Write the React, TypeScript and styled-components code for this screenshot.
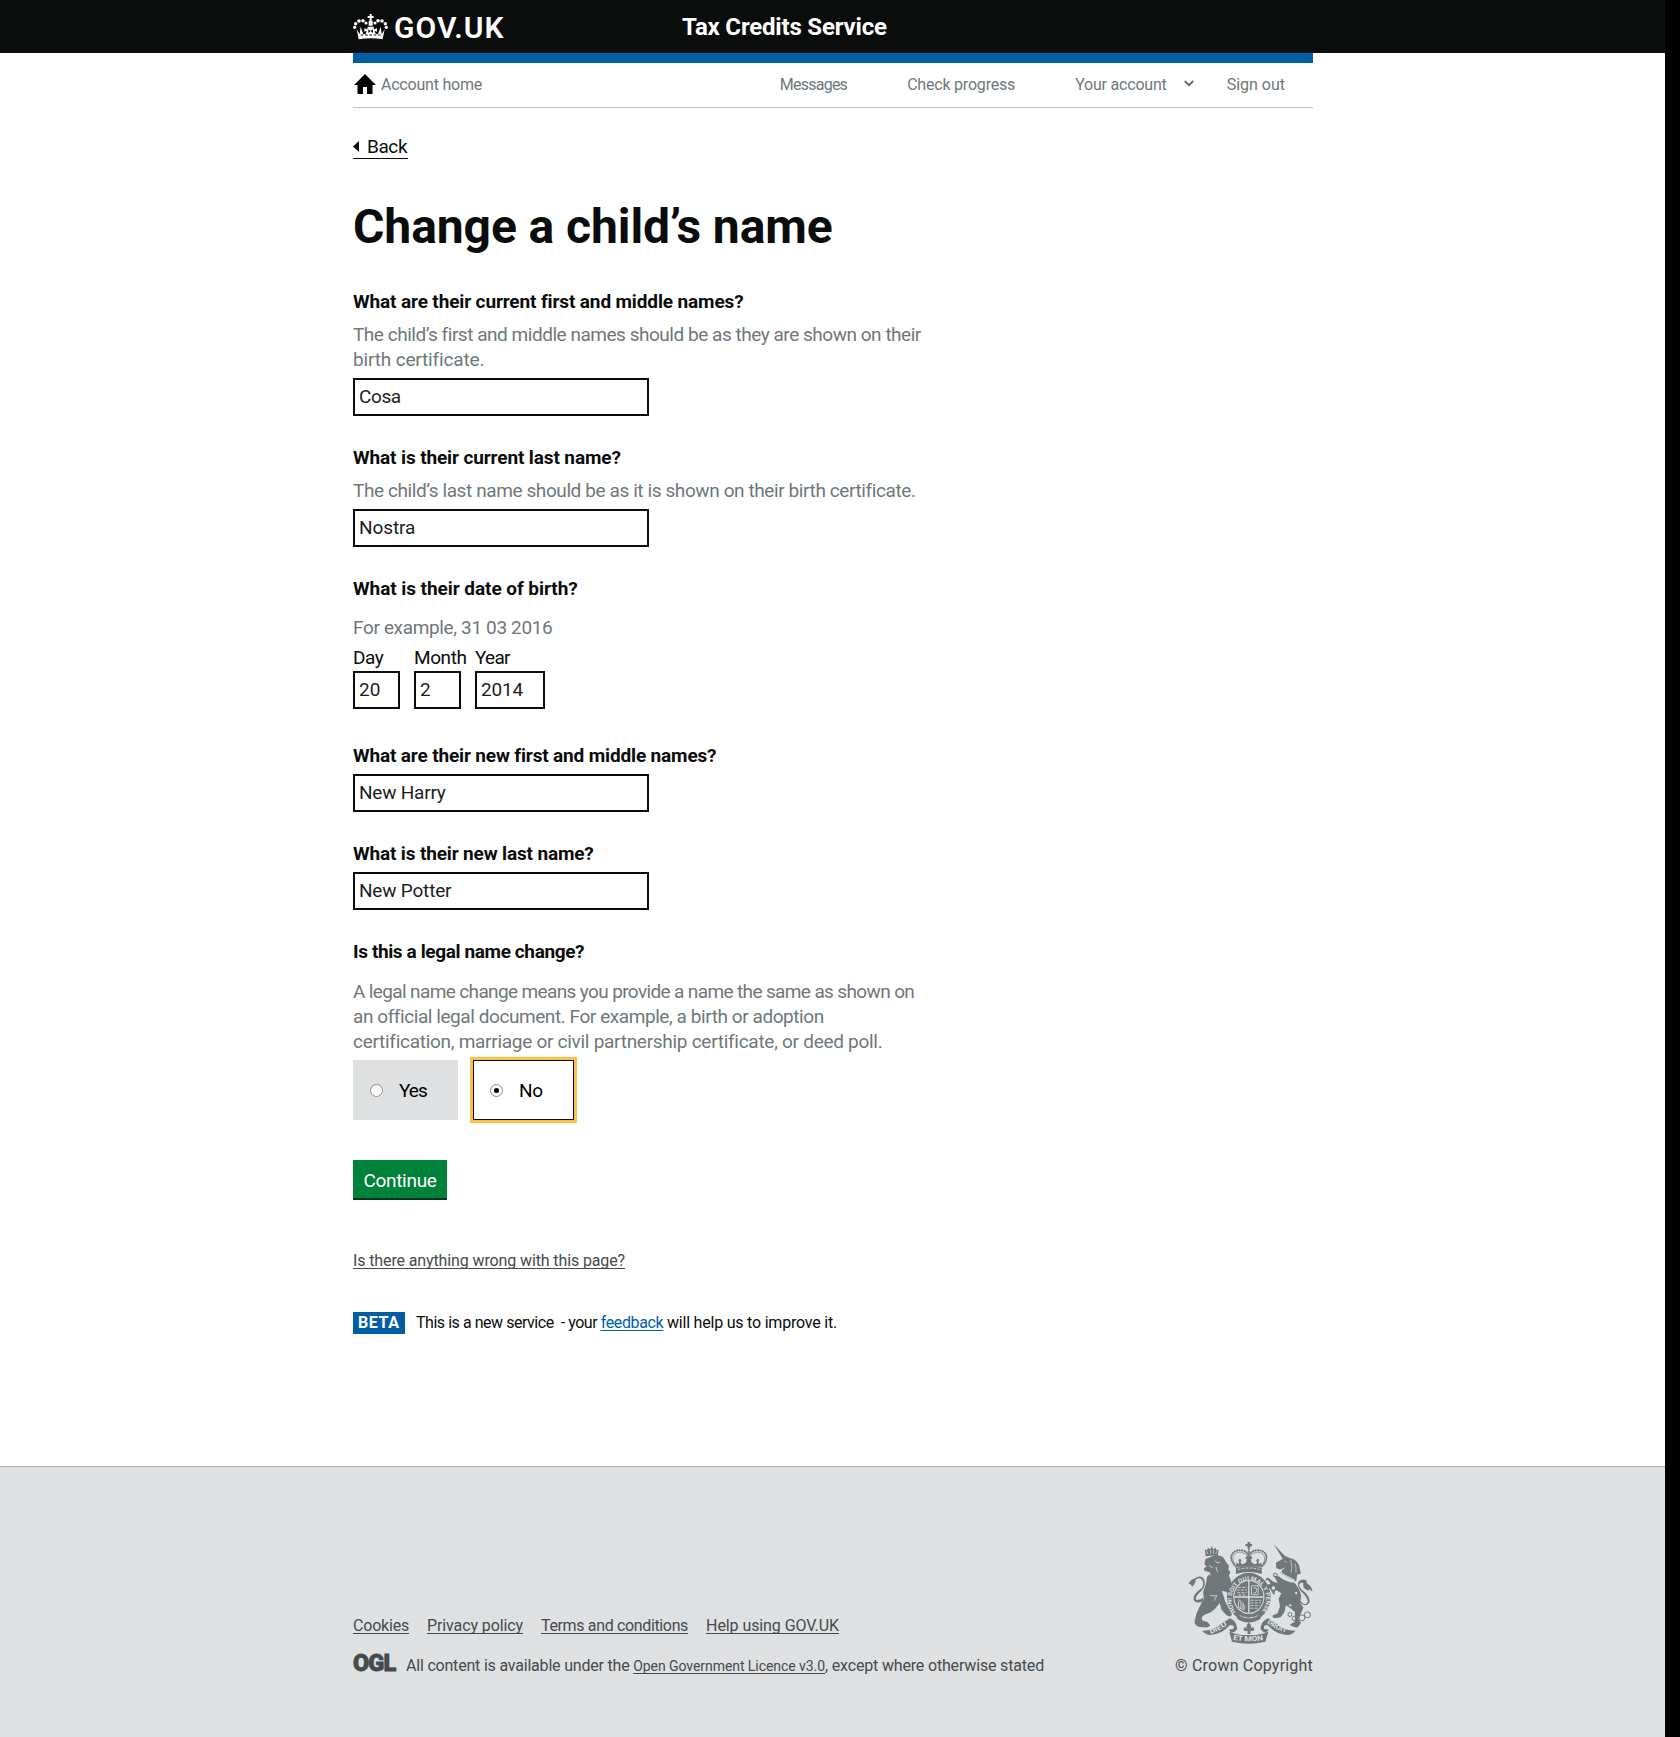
import React from "react";
import styled, { createGlobalStyle, css } from "styled-components";

const INK = "#0b0c0c";
const GREY = "#6f777b";
const FOOT = "#454a4d";
const BLUE = "#005ea5";

const GlobalStyle = createGlobalStyle`
  html { background: #000; }
  body { margin: 0; font-family: Roboto, "Liberation Sans", sans-serif; color: ${INK}; }
  *, *::before, *::after { box-sizing: border-box; }
`;

const tracking = css<{ $ls?: number }>`
  letter-spacing: ${(p) => p.$ls ?? 0}px;
`;

const Page = styled.div`
  width: 1665px;
  min-height: 1737px;
  background: #fff;
  display: flex;
  flex-direction: column;
`;
const Container = styled.div`
  width: 960px;
  margin-left: 353px;
`;
const Header = styled.header`
  height: 53px;
  background: ${INK};
  color: #fff;
`;
const HeaderRow = styled(Container)`
  display: grid;
  grid-template-columns: 329px 1fr;
  align-items: center;
  height: 53px;
`;
const Brand = styled.a`
  display: flex;
  align-items: center;
  gap: 6px;
  font-size: 30px;
  font-weight: 600;
  line-height: 53px;
  ${tracking}
`;
const BrandText = styled.span`
  padding-top: 1px;
`;
const ServiceName = styled.span`
  padding-top: 1px;
  font-size: 24px;
  font-weight: 700;
  line-height: 53px;
  ${tracking}
`;
const NavBar = styled(Container)`
  display: flex;
  justify-content: space-between;
  align-items: flex-start;
  height: 55px;
  padding: 11px 28px 0 1px;
  border-top: 10px solid ${BLUE};
  border-bottom: 1px solid #bfc1c3;
  color: ${GREY};
  font-size: 16px;
  line-height: 22px;
`;
const NavHome = styled.a`
  display: flex;
  gap: 5px;
  ${tracking}
`;
const NavLinks = styled.nav`
  display: flex;
  gap: 60px;
`;
const NavLink = styled.a`
  display: flex;
  white-space: nowrap;
  ${tracking}
`;
const NavGroup = styled.div`
  display: flex;
  gap: 17px;
`;
const Account = styled.div`
  display: flex;
  gap: 33px;
`;
const Main = styled.main`
  width: 960px;
  margin-left: 353px;
  display: flex;
  flex-direction: column;
  align-items: flex-start;
  height: 1358px;
`;
const BackLink = styled.a`
  display: flex;
  align-items: center;
  gap: 8px;
  width: 55px;
  height: 25px;
  margin-top: 26px;
  border-bottom: 1px solid ${INK};
  font-size: 19px;
  line-height: 24px;
  ${tracking}
`;
const BackText = styled.span`
  padding-top: 2px;
`;
const Title = styled.h1`
  margin: 43px 0 8px;
  font-size: 48px;
  line-height: 50px;
  font-weight: 700;
  ${tracking}
`;
const Field = styled.div<{ $gap?: number }>`
  display: flex;
  flex-direction: column;
  align-items: flex-start;
  margin-top: ${(p) => p.$gap ?? 29}px;
`;
const Label = styled.label`
  font-size: 19px;
  line-height: 25px;
  font-weight: 700;
  ${tracking}
`;
const Hint = styled.span<{ $gap?: number }>`
  display: flex;
  flex-direction: column;
  margin-top: ${(p) => p.$gap ?? 8}px;
  color: ${GREY};
  font-size: 19px;
  line-height: 25px;
`;
const Line = styled.span`
  white-space: pre;
  ${tracking}
`;
const Input = styled.input<{ $w?: number; $gap?: number; $ls?: number }>`
  width: ${(p) => p.$w ?? 296}px;
  height: 38px;
  margin: ${(p) => p.$gap ?? 6}px 0 0;
  padding: 0 4px 1px;
  border: 2px solid ${INK};
  border-radius: 0;
  background: #fff;
  color: #1c1d1d;
  font: 400 19px Roboto, sans-serif;
  outline: none;
  ${tracking}
`;
const DateRow = styled.div`
  display: grid;
  grid-template-columns: 61px 61px 70px;
  margin-top: 5px;
`;
const DatePart = styled.label`
  display: flex;
  flex-direction: column;
  font-size: 19px;
  line-height: 25px;
  ${tracking}
`;
const Options = styled.div`
  display: flex;
  gap: 15px;
  margin-top: 6px;
`;
const Option = styled.label<{ $on?: boolean; $ls?: number }>`
  display: flex;
  align-items: center;
  gap: 16px;
  width: ${(p) => (p.$on ? 101 : 105)}px;
  height: 60px;
  padding-left: ${(p) => (p.$on ? 16 : 17)}px;
  background: ${(p) => (p.$on ? "#fff" : "#dee0e2")};
  border: ${(p) => (p.$on ? `1px solid ${INK}` : "0")};
  box-shadow: ${(p) => (p.$on ? "0 0 0 3px #ffbf47" : "none")};
  color: #000;
  font-size: 19px;
  ${tracking}
`;
const Radio = styled.input`
  appearance: none;
  display: grid;
  place-items: center;
  width: 13px;
  height: 13px;
  margin: 0;
  border: 1px solid #8d8e90;
  border-radius: 50%;
  background: #fbfbfb;
  &:checked::after {
    content: "";
    width: 5px;
    height: 5px;
    border-radius: 50%;
    background: #000;
  }
`;
const Button = styled.button`
  width: 94px;
  height: 38px;
  margin-top: 40px;
  padding: 2px 0 0;
  border: 0;
  background: #00823b;
  box-shadow: 0 2px 0 #003618;
  color: #fff;
  font: 400 19px Roboto, sans-serif;
  ${tracking}
`;
const Under = styled.a<{ $ls?: number; $blue?: boolean; $small?: boolean }>`
  color: ${(p) => (p.$blue ? BLUE : FOOT)};
  font-size: ${(p) => (p.$small ? 14 : 16)}px;
  white-space: nowrap;
  text-decoration: underline 1px;
  text-underline-offset: 2px;
  text-decoration-skip-ink: none;
  ${tracking}
`;
const Problem = styled.div`
  margin-top: 53px;
  line-height: 20px;
`;
const Phase = styled.div`
  display: flex;
  margin-top: 41px;
  height: 22px;
  font-size: 16px;
  line-height: 22px;
  white-space: pre;
`;
const Beta = styled.strong`
  width: 52px;
  height: 22px;
  margin-right: 11px;
  padding-left: 5px;
  background: ${BLUE};
  color: #fff;
  line-height: 21px;
  ${tracking}
`;
const Footer = styled.footer`
  flex: 1;
  border-top: 1px solid #a1acb2;
  background: #dee0e2;
  color: ${FOOT};
  font-size: 16px;
  line-height: 20px;
`;
const FooterRow = styled(Container)`
  display: flex;
  justify-content: space-between;
  align-items: flex-end;
  padding-top: 75px;
`;
const FooterMeta = styled.div`
  display: flex;
  flex-direction: column;
  gap: 17px;
`;
const FooterLinks = styled.div`
  display: flex;
  gap: 18px;
`;
const Licence = styled.div`
  display: flex;
  align-items: baseline;
  height: 23px;
  white-space: pre;
`;
const Ogl = styled.span`
  width: 53px;
  font-size: 23.5px;
  font-weight: 900;
  line-height: 20px;
  -webkit-text-stroke: 0.8px ${FOOT};
  ${tracking}
`;
const Copyright = styled.div`
  display: flex;
  flex-direction: column;
  align-items: flex-end;
  gap: 12px;
  white-space: nowrap;
  ${tracking}
`;
const ArmsSvg = styled.svg`
  overflow: visible;
  letter-spacing: 0;
`;

const Crown = () => (
  <svg width="35" height="26" viewBox="39 38 105 78" fill="#fff">
    <path d="M50 84 L59 99 L62 76 L70 98 L77 98 L80 88 L73 91 L73 81 L82 84 L83 76 L101 76 L102 84 L111 81 L111 91 L104 88 L107 98 L114 98 L122 76 L125 99 L134 84 L128 114 Q92 108 56 114 Z" />
    <path d="M89 38h6v6h6v6h-6v8h3v15h-12v-15h3v-8h-6v-6h6z" />
    <circle cx="44" cy="78" r="5" /><circle cx="47" cy="67" r="5.2" /><circle cx="57" cy="59" r="5.5" /><circle cx="69" cy="58" r="5.3" /><circle cx="78" cy="65" r="4.6" />
    <circle cx="139" cy="78" r="5" /><circle cx="136" cy="67" r="5.2" /><circle cx="126" cy="59" r="5.5" /><circle cx="114" cy="58" r="5.3" /><circle cx="105" cy="65" r="4.6" />
    <path d="M62 101h62" stroke={INK} strokeWidth="3" strokeDasharray="8 5" />
    <path d="M85 84l7 5-7 6zM99 84l-7 5 7 6z" fill={INK} />
  </svg>
);

const House = () => (
  <svg width="22" height="20" viewBox="0 0 22 20" fill="#000">
    <path d="M11 0 L22 11 H18.5 V20 H13 V13 H9 V20 H3.5 V11 H0 Z" />
  </svg>
);

const Chevron = () => (
  <svg width="10" height="22" viewBox="0 0 10 22" fill="none" stroke="#5f676b" strokeWidth="1.8">
    <path d="M.8 7 L5 11.2 L9.2 7" />
  </svg>
);

const Arms = () => (
  <ArmsSvg width="125" height="102" viewBox="84 66 376 308" fill={GREY}>
    <defs>
      <path id="garter" d="M228 277 A52 57 0 1 1 306 277" />
      <path id="dieu" d="M151 343 Q178 336 212 308" />
      <path id="mon" d="M219 361 Q267 371 320 361" />
      <path id="droit" d="M322 309 Q350 335 392 342" />
    </defs>
    {/* royal crown */}
    <path d="M263 66h8v6h6v7h-6v7h-8v-7h-6v-7h6z" />
    <g fill="none" stroke={GREY} strokeLinecap="round">
      <path d="M228 140 C198 110 221 88 245 91 Q260 93 267 107 Q274 93 289 91 C313 88 336 110 306 140" strokeWidth="6" strokeDasharray="1 6.5" />
      <path d="M231 140 C205 112 226 95 244 97 Q260 99 267 113 Q274 99 290 97 C308 95 329 112 303 140" strokeWidth="2" />
      <path d="M267 88V130" strokeWidth="6" strokeDasharray="1 6.5" />
    </g>
    <path d="M228 141l2-14 6 6 2-7-3-4 5-6 5 6-3 4 3 7 8-1 6-5 2-8-5-5 6-7 5 7 5-7 6 7-5 5 2 8 6 5 8 1 3-7-3-4 5-6 5 6-3 4 2 7 6-6 2 14z" />
    <path d="M228 144 Q267 134 306 144 V163 Q267 150 228 163Z" />
    <path d="M234 149 Q267 140 300 149" fill="none" stroke="#dee0e2" strokeWidth="2.5" strokeDasharray="8 4" />
    {/* lion */}
    <path d="M137 110l-3-22 6 4 4-9 6 6 5-10 5 10 7-6 3 9 6-3-3 19q-18-4-36 2z" />
    <path d="M140 94l3 9m9-13v12m9-11l-1 11m10-8l-3 8" stroke="#dee0e2" strokeWidth="2" />
    <path d="M136 117 L158 108 Q178 103 190 113 L199 128 L207 138 L205 149 L211 157 L207 168 L212 181 Q217 197 220 205 L222 220 L219 231 Q212 238 207 229 L199 216 L185 213 L190 226 Q193 246 205 263 L216 283 Q216 291 207 291 L198 286 L184 270 L179 250 L166 267 L151 279 Q132 284 125 293 L126 302 L143 308 L151 319 L141 324 L119 323 Q103 319 103 306 L109 282 L117 264 Q123 251 131 239 L129 216 L137 194 L141 171 L151 158 L133 153 L131 145 L140 140 L133 133Z" />
    <path d="M165 122l6 7 9-2m-34 10l12 7m10-3q0 11 6 16m-32 6l11 3m18 61l-9 16m-12-17q12 5 20 2" fill="none" stroke="#dee0e2" strokeWidth="2.5" />
    <path d="M129 246 Q106 254 100 241 Q98 225 120 209 Q134 198 127 182 Q117 170 106 181 Q107 191 96 201 Q94 193 85 191 Q94 178 102 177 Q121 164 131 177 Q140 196 124 213 Q105 229 107 239 Q114 244 130 234Z" />
    {/* unicorn */}
    <path d="M342 73L379 111L370 117Z" />
    <path d="M349 129 L371 116 L379 109 L390 114 Q413 119 419 138 L424 161 L413 165 L410 185 L398 179 L367 163 L366 151 L378 143 L360 149 L351 145 L349 139Z" />
    <path d="M374 124l7 3m12-8q7 19 2 38m12-26q4 14 2 27" fill="none" stroke="#dee0e2" strokeWidth="2" />
    <path d="M358 170 Q380 188 405 189 Q420 207 425 228 L422 250 L432 264 L423 284 L417 300 L425 310 L414 324 Q398 323 391 315 L406 307 L406 277 L393 266 L379 257 L374 279 L363 293 L345 296 Q337 295 339 288 L354 281 L361 260 L357 237 L365 221 L349 211 L344 218 Q350 225 341 224 L330 206 L317 205 Q311 202 320 196 L333 192 L324 180 L318 184 Q316 175 325 173 L341 186 L354 190 L343 167Z" />
    <g fill="none" stroke={GREY} strokeWidth="3">
      <path d="M361 158 Q380 170 405 183" strokeWidth="6" stroke="#dee0e2" />
      <path d="M361 158 Q380 170 405 183" strokeWidth="3" strokeDasharray="3 4" />
      <circle cx="347" cy="166" r="6" /><circle cx="341" cy="205" r="7" fill="#dee0e2" /><circle cx="391" cy="285" r="6" /><circle cx="405" cy="297" r="7" /><circle cx="427" cy="295" r="9" /><circle cx="444" cy="286" r="9" />
      <circle cx="410" cy="220" r="5" fill="#dee0e2" /><circle cx="392" cy="257" r="5" fill="#dee0e2" />
    </g>
    <path d="M421 242 Q438 263 445 246 Q442 229 426 217 Q410 199 417 186 Q426 176 440 181 L443 191 Q457 198 459 216 L450 209 L446 213 L432 204 L431 190 Q419 187 419 198 Q423 208 438 219 Q455 238 449 250 Q438 264 421 249Z" />
    {/* garter and shield */}
    <ellipse cx="267" cy="232" rx="66" ry="73" />
    <ellipse cx="267" cy="232" rx="47" ry="51" fill="#dee0e2" />
    <ellipse cx="267" cy="232" rx="44" ry="48" />
    <g stroke="#dee0e2" fill="none" strokeWidth="2.5">
      <path d="M267 184v96M223 232h88" strokeWidth="4" />
      <path d="M234 203h27m-31 8h31m-29 8h29m-26 7h26" strokeDasharray="9 4" />
      <path d="M275 198h20v27h-20zM281 206q10-6 9 6t-9 6" />
      <path d="M235 240q18 8 19 28m-18-24v20l19 8m-12-24v18m6-12v14" />
      <path d="M272 242h33m-33 8h31m-31 8h28m-28 8h22" strokeDasharray="9 4" />
    </g>
    <text fill="#dee0e2" fontFamily="Roboto" fontSize="18" fontWeight="700"><textPath href="#garter" textLength="250" lengthAdjust="spacingAndGlyphs">HONI SOIT QUI MAL Y PENSE</textPath></text>
    <path d="M238 286q29 18 58 0l8 10q-37 26-74 0z" />
    <path d="M239 288q28 15 56 0" fill="none" stroke="#dee0e2" strokeWidth="2" />
    <circle cx="256" cy="294" r="2.5" fill="#dee0e2" /><circle cx="275" cy="294" r="2.5" fill="#dee0e2" />
    {/* scroll */}
    <path d="M126 334 Q157 335 178 317 L210 296 Q224 302 229 315 L232 327 Q226 341 213 339 L207 330 L221 329 L221 319 L210 317 Q186 345 151 347 Q136 346 126 334Z" />
    <path d="M408 334 Q377 335 356 317 L325 296 Q311 302 305 315 L302 327 Q308 341 321 339 L327 330 L313 329 L313 319 L324 317 Q348 345 384 347 Q399 346 408 334Z" />
    <path d="M208 337 Q233 348 267 347 Q301 348 326 337 L317 367 Q267 379 216 367Z" />
    <path d="M267 309q13 12 3 20 12-11 13 1-1 7-11 4v10h-9v-10q-10 3-12-4 2-12 13-1-10-8 3-20z" />
    <g fill="#dee0e2" fontFamily="Roboto" fontWeight="700">
      <text fontSize="19"><textPath href="#dieu" textLength="58" lengthAdjust="spacingAndGlyphs">DIEU</textPath></text>
      <text fontSize="22"><textPath href="#mon" textLength="92" lengthAdjust="spacingAndGlyphs">ET MON</textPath></text>
      <text fontSize="19"><textPath href="#droit" textLength="66" lengthAdjust="spacingAndGlyphs">DROIT</textPath></text>
    </g>
  </ArmsSvg>
);

export default function App() {
  return (
    <Page>
      <GlobalStyle />
      <Header>
        <HeaderRow>
          <Brand $ls={1.05}><Crown /><BrandText>GOV.UK</BrandText></Brand>
          <ServiceName $ls={-0.19}>Tax Credits Service</ServiceName>
        </HeaderRow>
      </Header>
      <NavBar>
        <NavHome $ls={-0.22}><House />Account home</NavHome>
        <NavLinks>
          <NavLink $ls={-0.75}>Messages</NavLink>
          <NavLink $ls={-0.2}>Check progress</NavLink>
          <Account>
            <NavGroup><NavLink $ls={-0.2}>Your account</NavLink><Chevron /></NavGroup>
            <NavLink>Sign out</NavLink>
          </Account>
        </NavLinks>
      </NavBar>
      <Main>
        <BackLink $ls={-0.4}>
          <svg width="6" height="11" viewBox="0 0 6 11" fill={INK}><path d="M6 0V11L0 5.5Z" /></svg>
          <BackText>Back</BackText>
        </BackLink>
        <Title $ls={-0.08}>Change a child’s name</Title>
        <Field>
          <Label $ls={-0.13}>What are their current first and middle names?</Label>
          <Hint>
            <Line $ls={-0.47}>The child’s first and middle names should be as they are shown on their</Line>
            <Line $ls={-0.16}>birth certificate.</Line>
          </Hint>
          <Input $ls={-0.4} defaultValue="Cosa" />
        </Field>
        <Field>
          <Label $ls={-0.12}>What is their current last name?</Label>
          <Hint><Line $ls={-0.4}>The child’s last name should be as it is shown on their birth certificate.</Line></Hint>
          <Input $ls={-0.1} defaultValue="Nostra" />
        </Field>
        <Field>
          <Label $ls={-0.06}>What is their date of birth?</Label>
          <Hint $gap={14}><Line $ls={-0.35}>For example, 31 03 2016</Line></Hint>
          <DateRow>
            <DatePart $ls={-0.4}>Day<Input $w={47} $gap={1} defaultValue="20" /></DatePart>
            <DatePart $ls={-0.4}>Month<Input $w={47} $gap={1} defaultValue="2" /></DatePart>
            <DatePart $ls={-0.7}>Year<Input $w={70} $gap={1} $ls={-0.15} defaultValue="2014" /></DatePart>
          </DateRow>
        </Field>
        <Field $gap={34}>
          <Label $ls={-0.15}>What are their new first and middle names?</Label>
          <Input $ls={-0.22} defaultValue="New Harry" />
        </Field>
        <Field>
          <Label $ls={-0.15}>What is their new last name?</Label>
          <Input $ls={-0.2} defaultValue="New Potter" />
        </Field>
        <Field>
          <Label $ls={-0.38}>Is this a legal name change?</Label>
          <Hint $gap={15}>
            <Line $ls={-0.63}>A legal name change means you provide a name the same as shown on</Line>
            <Line $ls={-0.43}>an official legal document. For example, a birth or adoption</Line>
            <Line $ls={-0.28}>certification, marriage or civil partnership certificate, or deed poll.</Line>
          </Hint>
          <Options>
            <Option $ls={-1}><Radio type="radio" name="legal" />Yes</Option>
            <Option $on $ls={-0.2}><Radio type="radio" name="legal" defaultChecked />No</Option>
          </Options>
        </Field>
        <Button $ls={-0.3}>Continue</Button>
        <Problem><Under $ls={-0.12}>Is there anything wrong with this page?</Under></Problem>
        <Phase>
          <Beta $ls={0.6}>BETA</Beta>
          <Line $ls={-0.46}>{"This is a new service\u00a0 - your "}</Line>
          <Under $blue $ls={-0.38}>feedback</Under>
          <Line $ls={-0.21}>{" will help us to improve it."}</Line>
        </Phase>
      </Main>
      <Footer>
        <FooterRow>
          <FooterMeta>
            <FooterLinks>
              <Under $ls={-0.2}>Cookies</Under>
              <Under $ls={-0.11}>Privacy policy</Under>
              <Under $ls={-0.35}>Terms and conditions</Under>
              <Under $ls={-0.08}>Help using GOV.UK</Under>
            </FooterLinks>
            <Licence>
              <Ogl $ls={-0.9}>OGL</Ogl>
              <Line $ls={-0.2}>{"All content is available under the "}</Line>
              <Under $small $ls={-0.06}>Open Government Licence v3.0</Under>
              <Line $ls={-0.17}>, except where otherwise stated</Line>
            </Licence>
          </FooterMeta>
          <Copyright $ls={0.2}>
            <Arms />
            © Crown Copyright
          </Copyright>
        </FooterRow>
      </Footer>
    </Page>
  );
}
